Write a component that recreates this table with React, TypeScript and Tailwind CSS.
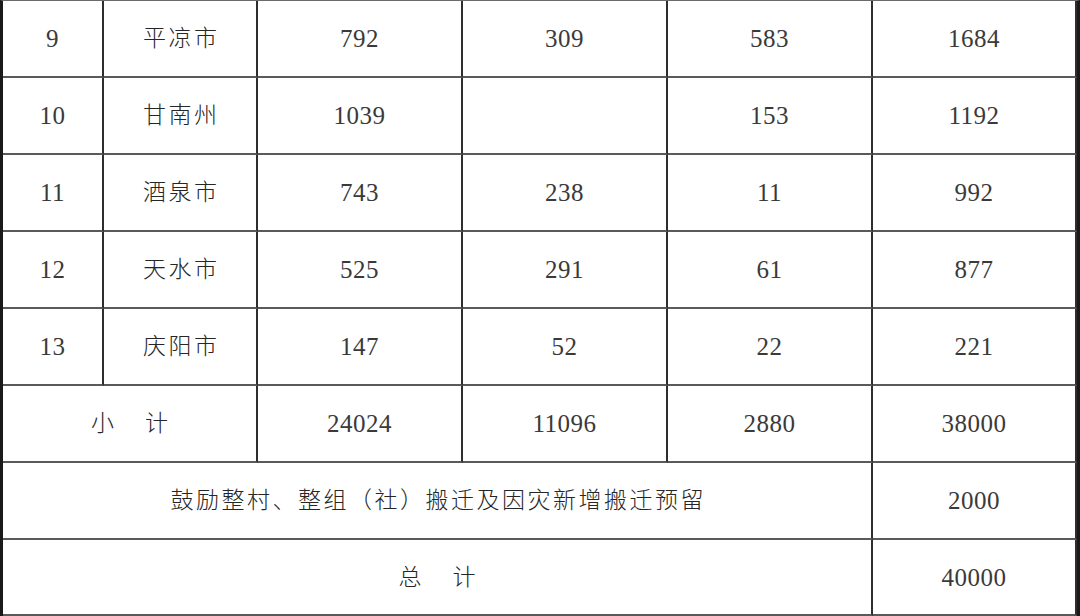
import React from 'react';

type Row = { no: string; city: string; a: string; b: string; c: string; total: string };

const ROWS: Row[] = [
  { no: '9', city: '平凉市', a: '792', b: '309', c: '583', total: '1684' },
  { no: '10', city: '甘南州', a: '1039', b: '', c: '153', total: '1192' },
  { no: '11', city: '酒泉市', a: '743', b: '238', c: '11', total: '992' },
  { no: '12', city: '天水市', a: '525', b: '291', c: '61', total: '877' },
  { no: '13', city: '庆阳市', a: '147', b: '52', c: '22', total: '221' },
];

const cell = 'flex items-center justify-center border-b-2 border-b-[#5a5a5a] border-r-2 border-r-[#2e2e2e]';
const num = 'text-[25px] leading-none text-[#3a3a3a] tracking-[0.5px]';
const cjk = 'text-[23px] leading-none font-light tracking-[2.5px] pl-[2.5px]';

export default function App() {
  return (
    <div
      className="w-[1080px] h-[616px] overflow-hidden bg-white text-[#262626] border-l-[3px] border-r-[3px] border-l-[#1a1a1a] border-r-[#1a1a1a] border-t border-t-[#6a6a6a]"
      style={{ fontFamily: '"Liberation Serif", "Noto Sans CJK SC", serif' }}
    >
      <div className="grid grid-cols-[101px_154px_205px_205px_205px_204px] grid-rows-[repeat(7,77px)_76px]">
        {ROWS.map((r) => (
          <React.Fragment key={r.no}>
            <div className={cell}><span className={num}>{r.no}</span></div>
            <div className={cell}><span className={cjk}>{r.city}</span></div>
            <div className={cell}><span className={num}>{r.a}</span></div>
            <div className={cell}><span className={num}>{r.b}</span></div>
            <div className={cell}><span className={num}>{r.c}</span></div>
            <div className={`${cell} border-r-0`}><span className={num}>{r.total}</span></div>
          </React.Fragment>
        ))}

        {/* 小计 */}
        <div className={`${cell} col-span-2`}>
          <span className="text-[23px] leading-none font-light flex gap-[31px]">
            <span>小</span>
            <span>计</span>
          </span>
        </div>
        <div className={cell}><span className={num}>24024</span></div>
        <div className={cell}><span className={num}>11096</span></div>
        <div className={cell}><span className={num}>2880</span></div>
        <div className={`${cell} border-r-0`}><span className={num}>38000</span></div>

        {/* 预留 */}
        <div className={`${cell} col-span-5`}>
          <span className={cjk}>鼓励整村、整组（社）搬迁及因灾新增搬迁预留</span>
        </div>
        <div className={`${cell} border-r-0`}><span className={num}>2000</span></div>

        {/* 总计 */}
        <div className={`${cell} col-span-5`}>
          <span className="text-[23px] leading-none font-light flex gap-[31px]">
            <span>总</span>
            <span>计</span>
          </span>
        </div>
        <div className={`${cell} border-r-0`}><span className={num}>40000</span></div>
      </div>
    </div>
  );
}
